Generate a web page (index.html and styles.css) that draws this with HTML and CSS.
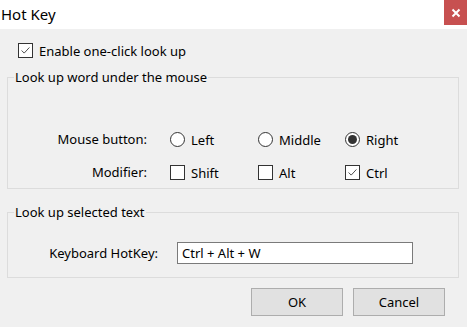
FILE: index.html
```html
<!DOCTYPE html>
<html lang="en">
<head>
    <meta charset="UTF-8">
    <title>Hot Key</title>
    <link rel="stylesheet" href="styles.css">
</head>
<body>
    <div class="titlebar">
        <span class="title">Hot Key</span>
        <button class="close">
            <svg width="10" height="10" viewBox="0 0 10 10"><path d="M1.5 1.5 L8.5 8.5 M8.5 1.5 L1.5 8.5" stroke="#fff" stroke-width="2"/></svg>
        </button>
    </div>

    <div class="dialog">
        <label class="option top-option">
            <span class="box checked"><svg viewBox="0 0 15 15"><polyline points="3,7.5 6,10.5 12,4" fill="none" stroke="#333" stroke-width="1"/></svg></span>
            Enable one-click look up
        </label>

        <fieldset class="group group-mouse">
            <legend>Look up word under the mouse</legend>
            <div class="grid">
                <span class="label">Mouse button:</span>
                <label class="option"><span class="radio"></span>Left</label>
                <label class="option"><span class="radio"></span>Middle</label>
                <label class="option"><span class="radio on"></span>Right</label>

                <span class="label">Modifier:</span>
                <label class="option"><span class="box"></span>Shift</label>
                <label class="option"><span class="box"></span>Alt</label>
                <label class="option"><span class="box checked"><svg viewBox="0 0 15 15"><polyline points="3,7.5 6,10.5 12,4" fill="none" stroke="#333" stroke-width="1"/></svg></span>Ctrl</label>
            </div>
        </fieldset>

        <fieldset class="group group-text">
            <legend>Look up selected text</legend>
            <div class="hotkey-row">
                <span class="label hotkey-label">Keyboard HotKey:</span>
                <div class="textbox">Ctrl + Alt + W</div>
            </div>
        </fieldset>

        <div class="buttons">
            <button class="btn">OK</button>
            <button class="btn">Cancel</button>
        </div>
    </div>
</body>
</html>
```

FILE: styles.css
```css
body {
    margin: 0;
    width: 467px;
    height: 327px;
    overflow: hidden;
    background-color: #f0f0f0;
    font-family: "Noto Sans", "Open Sans", sans-serif;
    font-size: 13px;
    color: #000;
}

.titlebar {
    height: 29px;
    background-color: #fff;
    display: flex;
    justify-content: space-between;
    align-items: flex-start;
}

.title {
    font-size: 15px;
    line-height: 29px;
    padding-left: 1px;
}

.close {
    width: 23px;
    height: 25px;
    border: none;
    padding: 0;
    background-color: #c75050;
    display: flex;
    align-items: center;
    justify-content: center;
}

.dialog {
    padding: 0 8px 0 7px;
}

.option {
    display: flex;
    align-items: center;
    gap: 6px;
    white-space: nowrap;
}

.top-option {
    height: 15px;
    margin: 14px 0 0 11px;
}

.box {
    width: 13px;
    height: 13px;
    border: 1px solid #333;
    background-color: #fff;
    flex: none;
}

.box svg {
    display: block;
    width: 13px;
    height: 13px;
}

.radio {
    width: 13px;
    height: 13px;
    border: 1px solid #333;
    border-radius: 50%;
    background-color: #fff;
    flex: none;
    display: flex;
    align-items: center;
    justify-content: center;
}

.radio.on::after {
    content: "";
    width: 9px;
    height: 9px;
    border-radius: 50%;
    background-color: #333;
}

.group {
    margin: 0;
    padding: 0;
    border: 1px solid #dcdcdc;
}

.group legend {
    margin-left: 6px;
    padding: 0 1px;
    line-height: 16px;
}

.group-mouse {
    margin-top: 11px;
    height: 118px;
}

.grid {
    display: grid;
    grid-template-columns: 162px 88px 87px 1fr;
    grid-auto-rows: 15px;
    row-gap: 18px;
    margin-top: 47px;
}

.label {
    text-align: right;
    padding-right: 23px;
    line-height: 15px;
}

.group-text {
    margin-top: 15px;
    height: 72px;
}

.hotkey-row {
    display: flex;
    align-items: center;
    margin-top: 22px;
}

.hotkey-label {
    width: 150px;
    padding-right: 19px;
}

.textbox {
    width: 230px;
    height: 20px;
    line-height: 20px;
    padding-left: 4px;
    border: 1px solid #7a7a7a;
    background-color: #fff;
}

.buttons {
    display: flex;
    justify-content: flex-end;
    gap: 10px;
    margin: 10px 14px 0 0;
}

.btn {
    width: 92px;
    height: 28px;
    border: 1px solid #adadad;
    background-color: #e1e1e1;
    font-family: inherit;
    font-size: 13px;
    color: #000;
    padding: 0;
}
```
